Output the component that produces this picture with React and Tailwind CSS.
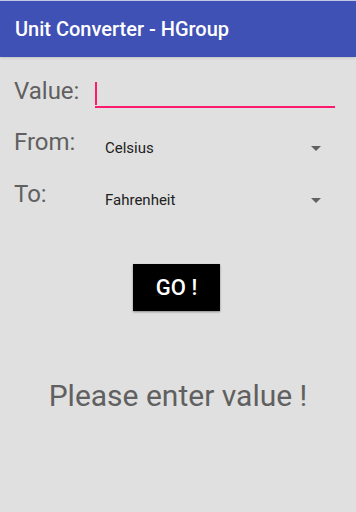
import React from "react";

function Caret() {
  return (
    <svg width="10" height="5" viewBox="0 0 10 5" className="shrink-0 mt-[16px]">
      <path d="M0 0 L10 0 L5 5 Z" fill="#616161" />
    </svg>
  );
}

function Row({ label, value, className }) {
  return (
    <div className={`flex items-start h-[24px] ${className}`}>
      <span className="w-[91px] pl-[14px] text-[24px] text-[#606060] leading-none">{label}</span>
      <div className="flex items-start flex-1 pl-[14px] pr-[35px]">
        <span className="flex-1 mt-[11px] text-[15px] leading-none text-[#212121]">{value}</span>
        <Caret />
      </div>
    </div>
  );
}

export default function App() {
  return (
    <div className="w-[356px] h-[512px] bg-[#e0e0e0] flex flex-col font-['Roboto',sans-serif]">
      <div className="h-[1px] bg-[#c5cae9]" />
      <div className="h-[56px] bg-[#3f51b5] flex items-center pl-[15px] shadow-sm">
        <span className="text-white text-[20px] font-medium">Unit Converter - HGroup</span>
      </div>

      <div className="flex items-start mt-[22px]">
        <span className="w-[95px] pl-[14px] text-[24px] text-[#606060] leading-none">Value:</span>
        <div className="flex-1 mr-[21px] h-[29px] border-b-2 border-[#ff1a6e] flex items-start pt-[3px]">
          <span className="w-[2px] h-[23px] bg-[#ff1a6e]" />
        </div>
      </div>

      <Row label="From:" value="Celsius" className="mt-[22px]" />
      <Row label="To:" value="Fahrenheit" className="mt-[28px]" />

      <div className="flex justify-center mt-[58px] pr-[3px]">
        <button className="w-[87px] h-[47px] bg-black text-white text-[22px] font-medium shadow-[0_1px_2px_rgba(0,0,0,0.4)]">
          GO !
        </button>
      </div>

      <div className="mt-[70px] text-center text-[30px] leading-none text-[#606060]">
        Please enter value !
      </div>
    </div>
  );
}
